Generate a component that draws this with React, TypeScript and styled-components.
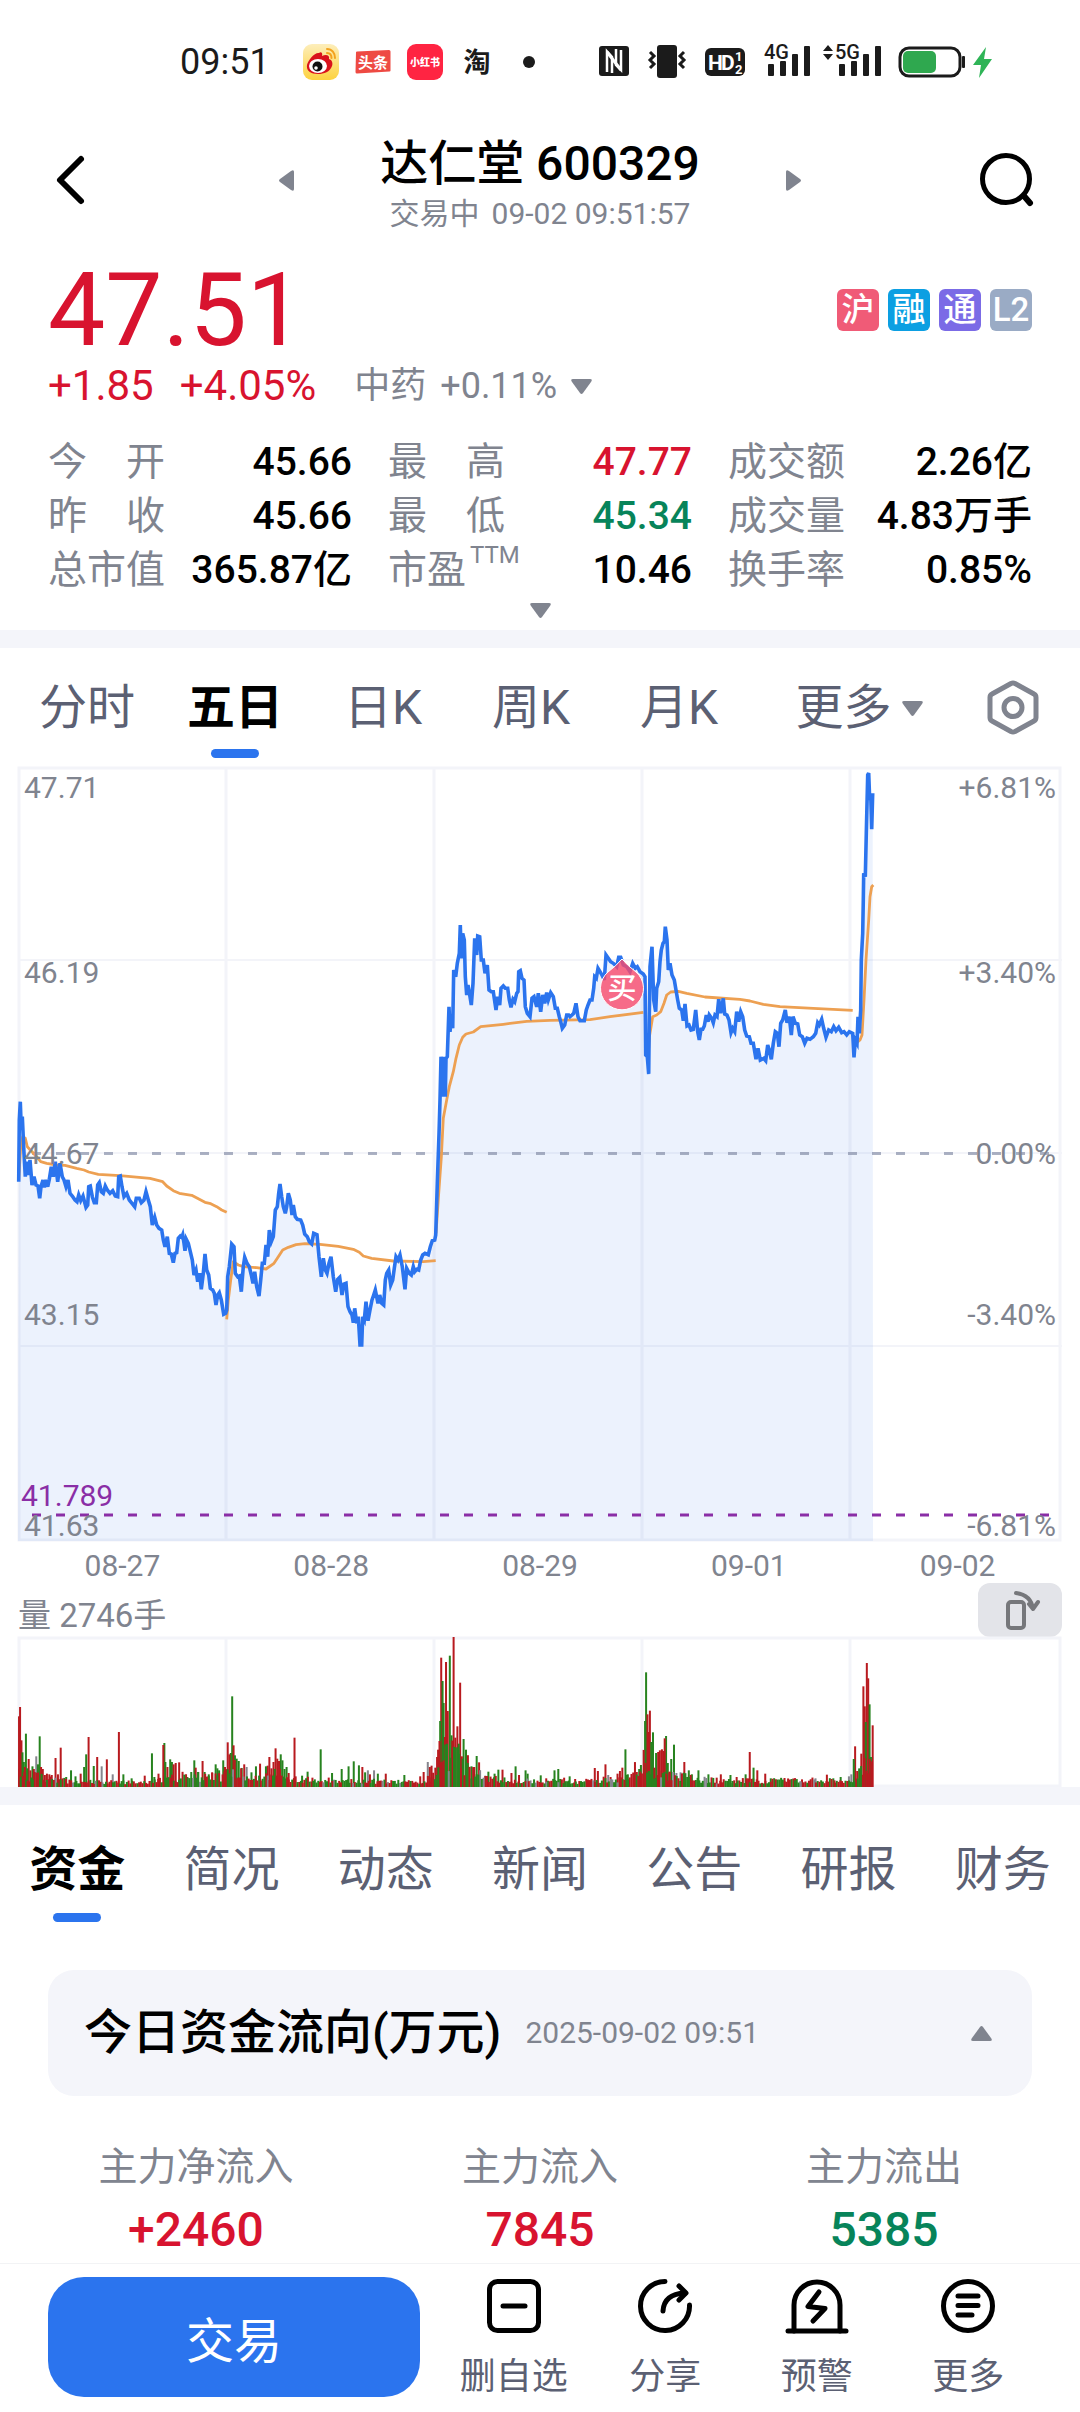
import React from "react";
import styled, { createGlobalStyle } from "styled-components";

const GlobalStyle = createGlobalStyle`
  *, *::before, *::after { box-sizing: border-box; }
  body { margin: 0; background: #fff; }
  button { margin: 0; padding: 0; border: 0; background: none; font: inherit; color: inherit; cursor: pointer; }
  dl, dd, dt, h1, h2, p { margin: 0; font-weight: inherit; }
  svg { display: block; overflow: visible; }
`;

const FONT = `Roboto, "Noto Sans CJK SC", sans-serif`;
const C = {
  ink: "#000",
  tab: "#5b6073",
  gray: "#80848f",
  red: "#d8132f",
  green: "#07845a",
  blue: "#2b74ee",
  band: "#f4f5fa",
};

const Page = styled.div`
  display: flex;
  flex-direction: column;
  font-family: ${FONT};
  color: ${C.ink};
`;

/* ---------- status bar ---------- */

const StatusBar = styled.div`
  display: flex;
  align-items: center;
  justify-content: space-between;
  height: 124px;
  padding: 0 87px 0 180px;
  color: #1b1b1b;
`;
const StatusGroup = styled.div`
  display: flex;
  align-items: center;
  gap: 16px;
`;
const Clock = styled.span`
  width: 107px;
  font-size: 36px;
  line-height: 40px;
`;

/* ---------- header ---------- */

const Header = styled.header`
  display: grid;
  grid-template-columns: 1fr minmax(0, 522px) 1fr;
  align-items: center;
  height: 112px;
  padding: 0 46px;
`;
const IconButton = styled.button<{ $end?: boolean }>`
  display: flex;
  align-items: center;
  justify-self: ${(p) => (p.$end ? "end" : "start")};
`;
const StockNav = styled.div`
  display: flex;
  align-items: center;
  justify-content: space-between;
`;
const Heading = styled.div`
  padding-top: 8px;
`;
const Title = styled.h1`
  font-size: 48px;
  font-weight: 500;
  line-height: 56px;
  text-align: center;
`;
const Subtitle = styled.p`
  display: flex;
  justify-content: center;
  gap: 12px;
  margin-top: 4px;
  font-size: 30px;
  line-height: 36px;
  color: ${C.gray};
`;

/* ---------- quote ---------- */

const Quote = styled.section`
  padding: 22px 48px 0;
`;
const PriceRow = styled.div`
  display: flex;
  align-items: center;
  justify-content: space-between;
`;
const Price = styled.div`
  font-size: 102px;
  line-height: 104px;
  color: ${C.red};
`;
const Badges = styled.div`
  display: flex;
  gap: 9px;
`;
const Badge = styled.span<{ $bg: string }>`
  display: flex;
  align-items: center;
  justify-content: center;
  width: 42px;
  height: 42px;
  border-radius: 6px;
  background: ${(p) => p.$bg};
  color: #fff;
  font-size: 33px;
  font-weight: 500;
  line-height: 42px;
`;
const ChangeRow = styled.div`
  display: flex;
  align-items: center;
  gap: 26px;
  line-height: 48px;
  font-size: 42px;
  color: ${C.red};
`;
const SectorButton = styled.button`
  display: flex;
  align-items: center;
  gap: 14px;
  margin-left: 12px;
  font-size: 36px;
  color: ${C.gray};
`;
const Stats = styled.dl`
  display: grid;
  grid-template-columns: repeat(3, 1fr);
  column-gap: 36px;
  margin-top: 25px;
  font-size: 39px;
  line-height: 54px;
`;
const Stat = styled.div`
  display: flex;
  justify-content: space-between;
  height: 54px;
  white-space: nowrap;
`;
const StatLabel = styled.dt`
  display: flex;
  gap: 4px;
  color: ${C.gray};
`;
const Sup = styled.span`
  font-size: 24px;
  line-height: 24px;
`;
const StatValue = styled.dd<{ $color?: string }>`
  font-weight: 500;
  color: ${(p) => p.$color || C.ink};
`;
const ExpandButton = styled.button`
  display: flex;
  align-items: flex-start;
  justify-content: center;
  width: 100%;
  height: 33px;
  padding-top: 6px;
`;
const Band = styled.div`
  height: 18px;
  background: ${C.band};
`;

/* ---------- tabs ---------- */

const ChartTabs = styled.nav`
  display: grid;
  grid-template-columns: repeat(5, 148fr) 212fr 96fr;
  align-items: start;
  padding: 30px 19px 9px 13px;
`;
const NewsTabs = styled.nav`
  display: grid;
  grid-template-columns: repeat(7, 1fr);
  padding: 35px 0 48px;
`;
const TabButton = styled.button<{ $active?: boolean; $gap: number }>`
  display: flex;
  flex-direction: column;
  align-items: center;
  gap: ${(p) => p.$gap}px;
  font-size: 48px;
  line-height: 60px;
  font-weight: ${(p) => (p.$active ? 700 : 400)};
  color: ${(p) => (p.$active ? C.ink : C.tab)};

  &::after {
    content: "";
    width: 48px;
    height: 9px;
    border-radius: 5px;
    background: ${(p) => (p.$active ? C.blue : "transparent")};
  }
`;
const MoreButton = styled.button`
  display: flex;
  align-items: center;
  justify-content: center;
  gap: 10px;
  font-size: 48px;
  line-height: 60px;
  color: ${C.tab};
`;
const GearButton = styled.button`
  display: flex;
  align-items: center;
  justify-content: center;
  height: 60px;
`;

/* ---------- charts ---------- */

const ChartArea = styled.section`
  padding: 0 18px;
`;
const ChartSvg = styled.svg`
  width: 100%;
  height: auto;
  font-family: ${FONT};
`;
const Dates = styled.div`
  display: grid;
  grid-template-columns: repeat(5, 1fr);
  padding-top: 8px;
  font-size: 30px;
  line-height: 34px;
  text-align: center;
  color: ${C.gray};
`;
const VolumeHead = styled.div`
  display: flex;
  justify-content: space-between;
  align-items: flex-end;
  height: 54px;
  font-size: 33px;
  line-height: 42px;
  color: ${C.gray};
`;
const RotateButton = styled.button`
  width: 84px;
  height: 54px;
  border-radius: 12px;
  background: #e3e4e9;
`;

/* ---------- fund flow ---------- */

const FlowCard = styled.button`
  display: flex;
  align-items: center;
  height: 126px;
  margin: 0 48px;
  padding: 0 40px 0 36px;
  border-radius: 26px;
  background: ${C.band};
  text-align: left;
`;
const FlowTitle = styled.h2`
  font-size: 48px;
  font-weight: 500;
  line-height: 60px;
`;
const FlowTime = styled.span`
  flex: 1;
  margin-left: 24px;
  font-size: 30px;
  line-height: 36px;
  color: ${C.gray};
`;
const Flows = styled.dl`
  display: grid;
  grid-template-columns: repeat(3, 1fr);
  padding: 46px 24px 3px;
  text-align: center;
`;
const FlowLabel = styled.dt`
  font-size: 39px;
  line-height: 50px;
  color: ${C.gray};
`;
const FlowValue = styled.dd<{ $color: string }>`
  margin-top: 8px;
  font-size: 48px;
  font-weight: 500;
  line-height: 60px;
  color: ${(p) => p.$color};
`;

/* ---------- bottom bar ---------- */

const BottomBar = styled.footer`
  display: flex;
  gap: 18px;
  padding: 13px 36px 15px 48px;
  border-top: 1px solid #f2f3f5;
`;
const TradeButton = styled.button`
  flex: 372 1 0;
  height: 120px;
  border-radius: 36px;
  background: ${C.blue};
  color: #fff;
  font-size: 48px;
`;
const Actions = styled.div`
  flex: 606 1 0;
  display: grid;
  grid-template-columns: repeat(4, 1fr);
`;
const ActionButton = styled.button`
  display: flex;
  flex-direction: column;
  align-items: center;
  gap: 22px;
  font-size: 36px;
  line-height: 40px;
  color: ${C.tab};
`;

/* ---------- small drawings ---------- */

const TRI: Record<string, [number, number, string]> = {
  down: [21, 15, "M2 0h17q3 0 1 3l-8 11q-1.500 2-3 0L1 3Q-1 0 2 0Z"],
  up: [21, 15, "M2 15h17q3 0 1-3L12 1q-1.500-2-3 0L1 12q-2 3 1 3Z"],
  left: [15, 21, "M15 2v17q0 3-3 1L1 12q-2-1.500 0-3L12 1q3-2 3 1Z"],
  right: [15, 21, "M0 2v17q0 3 3 1l11-8q2-1.500 0-3L3 1Q0-1 0 2Z"],
};
function Triangle({ dir }: { dir: string }) {
  const [w, h, d] = TRI[dir];
  return (
    <svg width={w} height={h} viewBox={`0 0 ${w} ${h}`} fill={C.gray}>
      <path d={d} />
    </svg>
  );
}

function StatusLeftIcons() {
  return (
    <>
      <svg width="36" height="36" viewBox="0 0 36 36">
        <defs>
          <linearGradient id="wb" x1="0" y1="0" x2="0" y2="1">
            <stop offset="0" stopColor="#fdeebb" />
            <stop offset="1" stopColor="#fdd23f" />
          </linearGradient>
        </defs>
        <rect width="36" height="36" rx="9" fill="url(#wb)" />
        <path d="M16 9c2-2 4 0 3 3 4-2 8-1 7 3 3 1 4 4 3 7-2 6-8 8-14 8C8 30 3 27 4 21c1-5 8-13 12-12Z" fill="#d9121c" />
        <ellipse cx="15" cy="22" rx="9" ry="7" fill="#fff" />
        <circle cx="14.500" cy="22.500" r="5" fill="#111" />
        <circle cx="13" cy="24" r="1.800" fill="#fff" />
        <path d="M24 5c5 0 8 4 8 9M24 9c3 0 4.500 2 4.500 5" fill="none" stroke="#f3a21e" strokeWidth="2" strokeLinecap="round" />
      </svg>
      <svg width="36" height="36" viewBox="0 0 36 36">
        <path d="M1 8.500Q1 7.500 2 7.500L34 6q1.500 0 1.500 1.500v19q0 1-1 1L2 29.500q-1.500 0-1.500-1.500Z" fill="#ee4a43" />
        <text x="18" y="24" textAnchor="middle" fontSize="15" fontWeight="700" fill="#fff">头条</text>
      </svg>
      <svg width="36" height="36" viewBox="0 0 36 36">
        <rect width="36" height="36" rx="9" fill="#ff2442" />
        <text x="18" y="22" textAnchor="middle" fontSize="10" fontWeight="900" fill="#fff">小红书</text>
      </svg>
      <svg width="36" height="36" viewBox="0 0 36 36">
        <text x="18" y="28" textAnchor="middle" fontSize="27" fontWeight="700" fill="#1b1b1b">淘</text>
      </svg>
      <svg width="36" height="36" viewBox="0 0 36 36">
        <circle cx="18" cy="18" r="6" fill="#1b1b1b" />
      </svg>
    </>
  );
}

function Signal({ label, arrows }: { label: string; arrows?: boolean }) {
  const o = arrows ? 16 : 5;
  return (
    <svg width={arrows ? 60 : 44} height="36" viewBox={`0 0 ${arrows ? 60 : 44} 36`} fill="#1b1b1b">
      {arrows && <path d="M5 1l5 6H0ZM5 16l5-6H0Z" />}
      <text x={o - 4} y="15" fontSize="20" fontWeight="500">{label}</text>
      <rect x={o} y="20" width="6" height="12" rx="1" />
      <rect x={o + 12} y="17" width="6" height="15" rx="1" />
      <rect x={o + 24} y="10" width="6" height="22" rx="1" />
      <rect x={o + 36} y="2" width="6" height="30" rx="1" />
    </svg>
  );
}

function StatusRightIcons() {
  return (
    <>
      <svg width="34" height="36" viewBox="0 0 34 36">
        <rect x="2" y="2" width="30" height="30" rx="3" fill="#1b1b1b" />
        <path d="M10 28V7.500L15 13V29M24 6v20L19 21V5" fill="none" stroke="#fff" strokeWidth="2.500" />
        <path d="M10 8L24 26" stroke="#fff" strokeWidth="3" />
      </svg>
      <svg width="40" height="36" viewBox="0 0 40 36">
        <rect x="10" y="1" width="20" height="33" rx="3" fill="#1b1b1b" />
        <path d="M3 8l4 4-4 4 4 4-4 4M37 8l-4 4 4 4-4 4 4 4" fill="none" stroke="#1b1b1b" strokeWidth="3" />
      </svg>
      <svg width="44" height="36" viewBox="0 0 44 36">
        <rect x="2" y="4" width="40" height="28" rx="6" fill="#1b1b1b" />
        <text x="5" y="26" fontSize="21" fontWeight="700" fill="#fff">H</text>
        <text x="18" y="26" fontSize="21" fontWeight="700" fill="#fff">D</text>
        <text x="32" y="17" fontSize="13" fontWeight="700" fill="#fff">1</text>
        <text x="32" y="30" fontSize="13" fontWeight="700" fill="#fff">2</text>
      </svg>
      <Signal label="4G" />
      <Signal label="5G" arrows />
      <svg width="94" height="36" viewBox="0 0 94 36">
        <rect x="1" y="4" width="60" height="28" rx="9" fill="none" stroke="#1b1b1b" strokeWidth="3" />
        <rect x="4" y="7" width="33" height="22" rx="5" fill="#2fa84f" />
        <rect x="63" y="12" width="3" height="12" rx="1" fill="#1b1b1b" />
        <path d="M87 3L74 21h8l-2 13 13-19h-8Z" fill="#2fb457" />
      </svg>
    </>
  );
}

/* ---------- price chart ---------- */

/* Traces are recorded at three samples to a chart unit, each run with its own origin. */
type Run = { dx: number; dy: number; pts: string };

const EARLY = { dx: -24, dy: 639 };
const LATE = { dx: 1236, dy: 399 };

const toPoints = ({ dx, dy, pts }: Run) =>
  pts.trim().split(/\s+/).map((p) => {
    const [x, y] = p.split(",").map(Number);
    return `${((x + dx) / 3).toFixed(1)},${((y + dy) / 3).toFixed(1)}`;
  });

const price: Run[] = [
  {
    ...EARLY,
    pts: `26,605 28,420 31,365 34,450 37,410 42,520 46,590 50,545 54,585 60,540 66,615 72,590 78,615 84,618 89,655 93,620 99,600 103,622 108,600 113,620 118,598 124,560 130,590 136,545 143,605 150,550 157,590 162,600 168,620 174,600 180,640 187,648 195,660 201,665 206,645 212,662 219,648 228,682 233,675 236,620 241,618 247,650 253,668 259,668 263,615 268,608 274,635 280,640 286,618 292,630 300,640 308,632 316,648 323,650 326,590 331,588 336,620 342,650 350,640 358,660 366,670 374,680 379,655 388,655 394,668 402,660 408,635 415,660 421,680 427,735 434,712 440,735 447,745 455,750 460,780 465,800 472,770 478,820 484,822 490,848 495,820 500,818 505,775 511,768 515,772 518,764 522,790 525,812 529,778 535,790 541,815 547,840 552,885 558,870 563,905 569,880 574,928 580,880 585,822 590,870 596,885 601,925 608,930 613,940 618,975 623,945 628,938 634,960 641,1003 647,1000 650,990 653,890 658,860 665,792 672,800 676,880 683,890 688,888 694,935 700,860 704,832 711,850 718,860 724,885 729,910 734,875 740,920 747,948 752,900 757,850 763,850 768,795 773,830 778,750 784,785 790,770 796,690 802,680 806,640 810,612 815,650 820,680 826,700 830,680 835,640 841,660 846,705 850,675 856,710 862,718 872,720 878,735 884,762 892,770 898,785 905,792 911,760 921,764 927,830 934,890 940,835 946,870 951,880 957,850 963,830 970,890 977,935 983,898 989,892 996,945 1002,912 1008,910 1014,980 1020,995 1026,1005 1030,1028 1034,985 1040,1030 1045,1010 1050,1095 1055,1095 1058,1010 1063,1020 1068,965 1074,1022 1080,990 1086,960 1091,945 1096,930 1104,970 1109,945 1115,970 1121,975 1126,900 1130,880 1136,870 1142,915 1148,900 1153,865 1158,830 1164,840 1170,825 1177,860 1185,928 1190,865 1198,880 1204,885 1210,860 1214,875 1220,868 1226,870 1232,840 1238,825 1245,820 1255,824 1261,800 1267,782 1274,780 1277,765`,
  },
  {
    ...LATE,
    pts: `17,1005 22,850 27,702 30,600 33,470 39,590 42,470 46,590 48,475 52,470 57,320 60,395 65,345 68,385 71,210 77,230 82,190 88,160 91,75 94,175 98,100 103,120 106,230 110,285 114,255 120,290 124,315 129,250 134,115 140,165 143,108 149,110 154,180 160,180 165,220 172,195 177,270 184,275 190,275 198,330 203,290 209,315 213,265 220,258 226,265 233,265 238,300 243,322 249,298 254,305 260,280 264,275 266,215 271,212 276,235 282,240 286,320 292,340 300,350 306,295 312,290 320,320 325,280 332,335 338,285 344,310 350,278 355,300 362,278 370,290 376,325 382,325 388,350 392,365 397,385 404,375 410,345 416,345 420,350 426,345 431,340 438,310 444,350 450,362 457,362 463,362 469,330 474,315 480,300 486,300 491,265 494,230 499,235 504,205 510,215 516,225 523,240 528,165 535,175 542,185 550,190 560,200 566,172 572,172 580,195 590,200 600,215 608,190 616,205 622,200 630,215 640,222 645,230 647,465 652,470 656,522 658,350 660,200 666,140 671,300 677,335 680,265 686,245 690,185 694,150 699,130 703,125 706,80 711,120 715,210 720,190 726,225 733,240 738,270 743,300 748,325 755,330 760,362 765,312 771,378 777,375 783,390 790,388 797,330 803,395 808,420 813,388 818,388 823,378 829,345 834,365 838,345 845,355 850,368 855,345 861,350 866,298 872,340 880,295 884,342 891,345 897,360 903,398 908,385 914,395 920,335 926,365 932,335 938,350 944,390 950,408 958,410 963,430 970,430 978,478 984,445 991,480 1001,475 1007,482 1013,435 1018,450 1024,478 1030,430 1036,395 1042,400 1047,440 1052,370 1058,360 1066,330 1071,368 1078,350 1084,405 1089,350 1096,370 1103,372 1109,405 1117,410 1124,430 1131,415 1140,418 1150,410 1157,400 1163,368 1168,375 1175,358 1181,385 1188,412 1196,390 1204,395 1211,380 1218,392 1226,382 1235,398 1242,395 1250,405 1258,395 1268,400 1272,472 1276,420 1281,430 1284,350 1288,400 1292,330 1294,180 1298,100 1300,0 1301,-80 1306,-70 1309,-200 1313,-375 1316,-381 1319,-300 1322,-320 1325,-212 1328,-320`,
  },
];

const averages: Run[] = [
  { ...EARLY, pts: "26,600 32,500 38,470 46,475 52,500 66,515 80,530 92,545 110,550 140,555 165,556 200,565 222,570 236,576 265,583 330,587 420,595 458,605 470,618 490,632 508,640 545,646 568,658 585,667 602,671 620,680 635,690 650,697" },
  { ...EARLY, pts: "650,1018 655,960 662,900 670,845 685,855 700,860 740,863 768,867 792,850 805,830 818,810 835,802 858,794 885,791 930,793 985,799 1030,808 1048,817 1060,828 1085,835 1150,843 1240,845 1277,842" },
  { ...LATE, pts: "18,1000 26,880 34,772 40,655 50,600 58,560 70,515 78,475 88,435 98,412 108,402 130,396 152,380 220,373 290,364 360,361 480,359 540,350 640,337" },
  { ...LATE, pts: "654,480 658,412 668,350 680,345 692,335 702,310 710,285 722,276 745,274 770,280 825,291 930,298 960,303 1000,313 1050,320 1150,325 1268,331" },
  { ...LATE, pts: "1278,430 1290,420 1296,405 1302,300 1308,180 1316,60 1320,-10 1325,-40 1330,-45" },
];

const axis: [number, string, string][] = [
  [31, "47.71", "+6.81%"],
  [216, "46.19", "+3.40%"],
  [397, "44.67", "0.00%"],
  [558, "43.15", "-3.40%"],
  [769, "41.63", "-6.81%"],
];
const GRID = "#f3f4f9";
const COLS = [208, 416, 624, 832];

function PriceChart() {
  const line = price.flatMap(toPoints);
  return (
    <ChartSvg viewBox="0 0 1044 774" role="img" aria-label="五日">
      <g stroke={GRID} fill="none">
        <rect x="1" y="1" width="1041" height="772" strokeWidth="3" />
        {COLS.map((x) => <path key={x} d={`M${x} 0V774`} strokeWidth="3" />)}
        {[193, 386, 579].map((y) => <path key={y} d={`M0 ${y}H1044`} strokeWidth="2" />)}
      </g>
      <polygon points={`${line.join(" ")} 855,774 0,774`} fill={C.blue} fillOpacity="0.09" />
      <path d="M14 386.500H1036" stroke="#7f88a3" strokeOpacity="0.65" strokeWidth="3" strokeDasharray="9 15" />
      <path d="M14 748H1036" stroke="#8a2ea6" strokeWidth="3" strokeDasharray="9 15" />
      {averages.map((run, i) => (
        <polyline key={i} points={toPoints(run).join(" ")} fill="none" stroke="#eda052" strokeWidth="2.800" strokeLinejoin="round" />
      ))}
      <polyline points={line.join(" ")} fill="none" stroke={C.blue} strokeWidth="3.600" />
      <g fontSize="30" fill={C.gray}>
        {axis.map(([y, left, right]) => (
          <React.Fragment key={left}>
            <text x="6" y={y}>{left}</text>
            <text x="1038" y={y} textAnchor="end">{right}</text>
          </React.Fragment>
        ))}
      </g>
      <text x="3" y="739" fontSize="30" fill="#8a2ea6">41.789</text>
      <path d="M604 192Q610 199 618 205A21.500 21.500 0 1 1 590 205Q598 199 604 192Z" fill="#f9496a" fillOpacity="0.8" stroke="#fff" strokeWidth="1" />
      <text x="604" y="232" fontSize="29" fontWeight="500" fill="#fff" textAnchor="middle">买</text>
    </ChartSvg>
  );
}

/* ---------- volume chart ---------- */

const volumeLeft = `55,212,r 58,240,r 62,140,r 65,104,g 69,75,g 72,60,r 75,160,g 79,56,g 83,84,r 88,50,r 94,62,g 98,54,r 105,92,n 110,68,g 115,152,g 119,60,r 124,54,r 130,36,r 136,40,r 143,38,r 150,36,r 161,87,r 168,38,r 176,118,r 192,30,g 206,50,g 219,32,g 234,40,r 244,60,g 250,98,g 257,150,r 272,63,g 282,90,r 295,62,n 310,83,r 327,38,n 345,165,r 358,38,g 382,26,g 420,34,r 441,101,g 448,30,g 460,40,r 474,126,r 477,132,g 480,75,g 486,60,r 494,83,g 499,75,g 504,68,r 510,72,r 520,74,r 543,30,r 564,80,g 568,58,r 575,45,g 588,78,r 594,45,g 606,38,g 616,42,r 626,68,g 631,56,g 636,50,g 648,80,g 653,60,r 661,134,r 666,98,r 670,102,g 674,272,g 678,125,r 682,95,g 687,85,g 693,78,g 700,56,r 709,68,r 716,60,n 730,44,g 743,62,g 755,70,r 772,62,g 777,64,r 782,90,r 788,56,r 794,75,r 800,116,r 805,85,r 810,78,r 815,98,g 820,80,g 826,54,g 832,60,g 838,42,r 855,148,r 877,34,g 893,46,g 907,28,r 931,113,g 964,42,g 992,54,g 1012,62,g 1027,77,g 1042,65,g 1052,60,r 1060,44,g 1068,50,n 1074,38,r 1086,50,n 1097,40,g 1120,40,r 1174,36,g 1220,32,r 1230,45,r 1242,75,n 1248,60,r 1253,64,r 1264,58,r 1269,90,r 1272,112,r 1276,138,r 1278,198,g 1281,388,r 1285,318,g 1288,252,g 1292,150,r 1295,375,r 1300,228,r 1306,394,g 1311,155,g 1317,450,r 1322,148,r 1328,182,r 1332,130,g 1336,313,r 1341,92,r 1346,144,g 1353,112,g 1358,72,g 1369,62,g 1377,60,r 1384,93,g 1391,74,r 1409,34,n 1418,46,g 1436,40,g 1447,52,g 1459,52,r 1485,42,r 1497,62,g 1507,36,r 1526,50,g 1532,40,g`;
const volumeRight = `2,35,g 18,26,r 42,50,g 53,54,g 70,28,r 86,32,g 102,24,r 145,20,r 159,57,r 168,48,r 190,68,r 198,36,n 206,24,n 225,40,r 232,48,r 239,58,r 248,113,g 255,38,g 281,45,r 288,54,g 293,66,g 305,198,g 308,344,g 312,218,r 315,165,r 319,229,r 323,135,g 328,164,g 332,58,r 337,102,g 343,105,r 348,110,r 354,113,r 359,108,r 362,146,r 366,153,g 371,72,g 375,44,r 381,84,g 389,127,g 396,42,n 408,44,n 419,75,r 432,50,g 441,38,g 460,50,g 489,38,g 513,28,r 525,38,r 553,36,g 571,30,r 597,38,g 609,105,r 620,58,g 631,50,r 654,40,r 670,26,g 710,27,r 740,20,g 757,16,n 800,26,n 833,37,r 855,20,r 873,30,g 897,32,n 904,38,n 911,84,g 915,122,r 921,48,r 927,56,g 933,100,r 939,302,r 943,242,r 946,195,g 949,372,r 953,326,r 957,248,g 961,90,g 966,185,r`;

const VOL: Record<string, string> = { r: "#b81a1f", g: "#27831f", n: "#85858d" };

/* Height of the quiet minutes between the spikes, by position. */
const floor: [number, number][] = [
  [0, 16], [30, 8], [60, 5], [130, 4], [145, 8], [165, 12], [205, 12], [215, 24], [235, 9],
  [262, 16], [275, 8], [330, 6], [400, 5], [416, 12], [422, 45], [445, 34], [455, 15], [480, 7],
  [560, 5], [612, 10], [623, 40], [640, 14], [700, 6], [832, 7], [840, 20], [855, 34],
];
function quietHeight(x: number) {
  for (let i = 1; i < floor.length; i++) {
    const [x0, h0] = floor[i - 1];
    const [x1, h1] = floor[i];
    if (x <= x1) return h0 + ((h1 - h0) * (x - x0)) / (x1 - x0);
  }
  return 0;
}

type Bar = { x: number; h: number; c: string };
function buildBars(): Bar[] {
  const bars: Bar[] = [];
  let seed = 29;
  const next = () => (seed = (seed * 16807) % 2147483647) / 2147483647;
  for (let x = 0; x < 854; x += 1.74) {
    const k = next();
    bars.push({ x, h: 1.5 + quietHeight(x) * (0.3 + next() * 0.9), c: k < 0.46 ? "r" : k < 0.94 ? "g" : "n" });
  }
  const read = (src: string, shift: number) =>
    src.split(" ").forEach((s) => {
      const [x, h, c] = s.split(",");
      bars.push({ x: (Number(x) + shift) / 2.904 - 1, h: Number(h) / 3, c });
    });
  read(volumeLeft, -52);
  read(volumeRight, 1516);
  return bars.sort((a, b) => b.h - a.h);
}
const bars = buildBars();

function VolumeChart() {
  return (
    <ChartSvg viewBox="0 0 1044 150" role="img" aria-label="量">
      <g stroke={GRID} fill="none" strokeWidth="3">
        <rect x="1" y="1" width="1041" height="148" />
        {COLS.map((x) => <path key={x} d={`M${x} 0V150`} />)}
      </g>
      {bars.map((b, i) => (
        <rect key={i} x={b.x} y={150 - b.h} width="2" height={b.h} fill={VOL[b.c]} />
      ))}
    </ChartSvg>
  );
}

/* ---------- data ---------- */

const stats: { label: string; value: string; color?: string; sup?: string }[] = [
  { label: "今　开", value: "45.66" },
  { label: "最　高", value: "47.77", color: C.red },
  { label: "成交额", value: "2.26亿" },
  { label: "昨　收", value: "45.66" },
  { label: "最　低", value: "45.34", color: C.green },
  { label: "成交量", value: "4.83万手" },
  { label: "总市值", value: "365.87亿" },
  { label: "市盈", value: "10.46", sup: "TTM" },
  { label: "换手率", value: "0.85%" },
];
const badges = [
  ["沪", "#f05b77"],
  ["融", "#0c9fe2"],
  ["通", "#7b6be6"],
  ["L2", "#9aabc5"],
];
const flows = [
  ["主力净流入", "+2460", C.red],
  ["主力流入", "7845", C.red],
  ["主力流出", "5385", C.green],
];
const actions: [string, React.ReactNode][] = [
  ["删自选", <><rect x="4.500" y="4.500" width="49" height="49" rx="8" /><path d="M18 29h22" /></>],
  ["分享", <><path d="M29 4.500A24.500 24.500 0 1 0 53.500 28" /><path d="M27 34Q28 17 49 16" /><path d="M43 9l7 7-7 7" /></>],
  ["预警", <><path d="M6 54V28a23 23 0 0 1 46 0V54" /><path d="M0 54H58" /><path d="M31 15L20 29.500l17 2L25 44" /></>],
  ["更多", <><circle cx="29" cy="29" r="24.500" /><path d="M19 19h20M19 28.500h20M19 38h14" /></>],
];

export default function App() {
  return (
    <Page>
      <GlobalStyle />
      <StatusBar>
        <StatusGroup>
          <Clock>09:51</Clock>
          <StatusLeftIcons />
        </StatusGroup>
        <StatusGroup>
          <StatusRightIcons />
        </StatusGroup>
      </StatusBar>

      <Header>
        <IconButton aria-label="返回">
          <svg width="44" height="52" viewBox="0 0 44 52" fill="none" stroke="#000" strokeWidth="6" strokeLinecap="round" strokeLinejoin="round">
            <path d="M35 5L14 26l21 21" />
          </svg>
        </IconButton>
        <StockNav>
          <IconButton aria-label="上一只"><Triangle dir="left" /></IconButton>
          <Heading>
            <Title>达仁堂 600329</Title>
            <Subtitle>
              <span>交易中</span>
              <span>09-02 09:51:57</span>
            </Subtitle>
          </Heading>
          <IconButton aria-label="下一只"><Triangle dir="right" /></IconButton>
        </StockNav>
        <IconButton $end aria-label="搜索">
          <svg width="56" height="56" viewBox="0 0 56 56" fill="none" stroke="#000" strokeWidth="5" strokeLinecap="round">
            <circle cx="28" cy="27" r="23.500" />
            <path d="M46 44l6 7" strokeWidth="6" />
          </svg>
        </IconButton>
      </Header>

      <Quote>
        <PriceRow>
          <Price>47.51</Price>
          <Badges>
            {badges.map(([t, bg]) => <Badge key={t} $bg={bg}>{t}</Badge>)}
          </Badges>
        </PriceRow>
        <ChangeRow>
          <span>+1.85</span>
          <span>+4.05%</span>
          <SectorButton>
            <span>中药</span>
            <span>+0.11%</span>
            <Triangle dir="down" />
          </SectorButton>
        </ChangeRow>
        <Stats>
          {stats.map((s) => (
            <Stat key={s.label}>
              <StatLabel>{s.label}{s.sup && <Sup>{s.sup}</Sup>}</StatLabel>
              <StatValue $color={s.color}>{s.value}</StatValue>
            </Stat>
          ))}
        </Stats>
        <ExpandButton aria-label="展开"><Triangle dir="down" /></ExpandButton>
      </Quote>
      <Band />

      <ChartTabs>
        {["分时", "五日", "日K", "周K", "月K"].map((t) => (
          <TabButton key={t} $gap={11} $active={t === "五日"}>{t}</TabButton>
        ))}
        <MoreButton>更多<Triangle dir="down" /></MoreButton>
        <GearButton aria-label="设置">
          <svg width="54" height="56" viewBox="0 0 54 56" fill="none" stroke={C.gray} strokeWidth="5" strokeLinejoin="round">
            <path d="M25 3.500q2-1 4 0l19 10.500q2 1 2 3.500v20q0 2.500-2 3.500l-19 10.500q-2 1-4 0l-19-10.500q-2-1-2-3.500V17.500q0-2.500 2-3.500Z" />
            <circle cx="27" cy="27.500" r="9" />
          </svg>
        </GearButton>
      </ChartTabs>

      <ChartArea>
        <PriceChart />
        <Dates>
          {["08-27", "08-28", "08-29", "09-01", "09-02"].map((d) => <span key={d}>{d}</span>)}
        </Dates>
        <VolumeHead>
          <span>量 2746手</span>
          <RotateButton aria-label="横屏">
            <svg width="84" height="54" viewBox="0 0 84 54" fill="none" stroke="#76777b" strokeWidth="4" strokeLinecap="round" strokeLinejoin="round">
              <rect x="30" y="19" width="16" height="26" rx="3" />
              <path d="M38 10Q53 12 55 26M51 21l4 5 5-7" />
            </svg>
          </RotateButton>
        </VolumeHead>
        <VolumeChart />
      </ChartArea>
      <Band />

      <NewsTabs>
        {["资金", "简况", "动态", "新闻", "公告", "研报", "财务"].map((t) => (
          <TabButton key={t} $gap={13} $active={t === "资金"}>{t}</TabButton>
        ))}
      </NewsTabs>

      <FlowCard>
        <FlowTitle>今日资金流向(万元)</FlowTitle>
        <FlowTime>2025-09-02 09:51</FlowTime>
        <Triangle dir="up" />
      </FlowCard>
      <Flows>
        {flows.map(([label, value, color]) => (
          <div key={label}>
            <FlowLabel>{label}</FlowLabel>
            <FlowValue $color={color}>{value}</FlowValue>
          </div>
        ))}
      </Flows>

      <BottomBar>
        <TradeButton>交易</TradeButton>
        <Actions>
          {actions.map(([label, icon]) => (
            <ActionButton key={label}>
              <svg width="58" height="58" viewBox="0 0 58 58" fill="none" stroke="#000" strokeWidth="5" strokeLinecap="round" strokeLinejoin="round">
                {icon}
              </svg>
              {label}
            </ActionButton>
          ))}
        </Actions>
      </BottomBar>
    </Page>
  );
}
